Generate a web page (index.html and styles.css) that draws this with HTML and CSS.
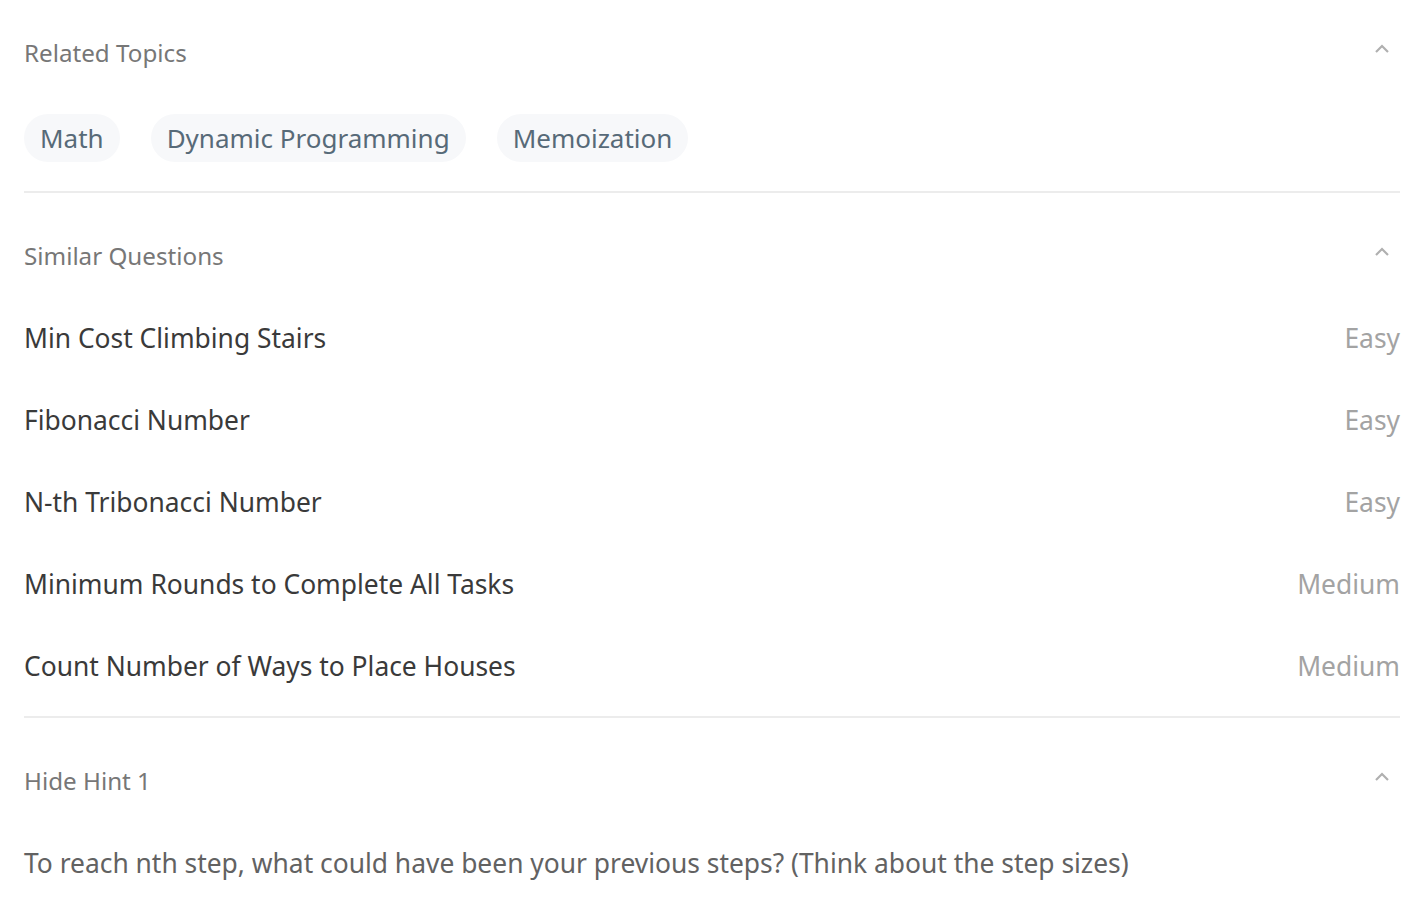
FILE: index.html
```html
<!DOCTYPE html>
<html>
<head>
<meta charset="utf-8">
<link rel="stylesheet" href="styles.css">
</head>
<body>
<div class="panel">
  <section class="section first">
    <div class="sec-head">
      <span class="sec-title">Related Topics</span>
      <svg class="chev" width="20" height="12" viewBox="0 0 20 12"><path d="M4 9 L10 3 L16 9" fill="none" stroke="#b0b0b0" stroke-width="2.2"/></svg>
    </div>
    <div class="chips">
      <span class="chip">Math</span>
      <span class="chip">Dynamic Programming</span>
      <span class="chip">Memoization</span>
    </div>
  </section>
  <section class="section">
    <div class="sec-head">
      <span class="sec-title">Similar Questions</span>
      <svg class="chev" width="20" height="12" viewBox="0 0 20 12"><path d="M4 9 L10 3 L16 9" fill="none" stroke="#b0b0b0" stroke-width="2.2"/></svg>
    </div>
    <ul class="qlist">
      <li class="q"><span class="q-name">Min Cost Climbing Stairs</span><span class="q-diff">Easy</span></li>
      <li class="q"><span class="q-name">Fibonacci Number</span><span class="q-diff">Easy</span></li>
      <li class="q"><span class="q-name">N-th Tribonacci Number</span><span class="q-diff">Easy</span></li>
      <li class="q"><span class="q-name">Minimum Rounds to Complete All Tasks</span><span class="q-diff">Medium</span></li>
      <li class="q"><span class="q-name">Count Number of Ways to Place Houses</span><span class="q-diff">Medium</span></li>
    </ul>
  </section>
  <section class="section last">
    <div class="sec-head">
      <span class="sec-title">Hide Hint 1</span>
      <svg class="chev" width="20" height="12" viewBox="0 0 20 12"><path d="M4 9 L10 3 L16 9" fill="none" stroke="#b0b0b0" stroke-width="2.2"/></svg>
    </div>
    <p class="hint">To reach nth step, what could have been your previous steps? (Think about the step sizes)</p>
  </section>
</div>
</body>
</html>
```
FILE: styles.css
```css
* { box-sizing: border-box; }
html, body { margin: 0; padding: 0; background: #fff; }
body { font-family: "Noto Sans", "Open Sans", sans-serif; }
.panel { padding: 0 25px 0 24px; }
.section { border-bottom: 2px solid #ececec; padding-top: 22px; }
.section.first { padding-top: 12px; }
.section.last { border-bottom: none; }
.sec-head {
  display: flex; justify-content: space-between; align-items: center;
  height: 82px; padding-bottom: 2px;
}
.sec-title { font-size: 24.2px; color: #777; }
.chev { margin-right: 8px; margin-bottom: 7px; }
.chips { display: flex; gap: 31px; padding: 20px 0 29px; }
.chip {
  background: #f7f8fa; color: #576a78; font-size: 26px;
  padding: 0 16px; height: 48px; line-height: 48px; border-radius: 24px;
}
.qlist { list-style: none; margin: 0; padding: 0 0 9px; }
.q { display: flex; justify-content: space-between; align-items: center; height: 82px; }
.q-name { font-size: 26.4px; color: #3a3a3a; }
.q-diff { font-size: 26.4px; color: #a3a3a3; }
.hint { margin: 0; font-size: 26.4px; line-height: 82px; color: #626262; }
```
